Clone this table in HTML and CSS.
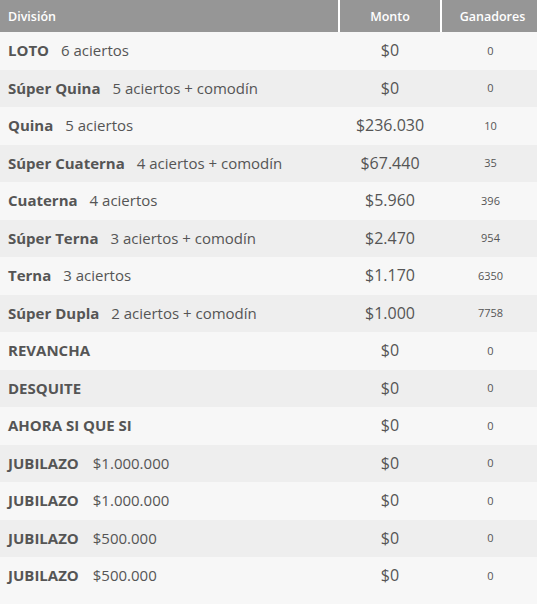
FILE: index.html
```html
<!DOCTYPE html>
<html lang="es">
<head>
<meta charset="utf-8">
<link rel="stylesheet" href="styles.css">
</head>
<body>
<table class="results">
  <thead>
    <tr>
      <th class="col-div">División</th>
      <th class="col-monto">Monto</th>
      <th class="col-gan">Ganadores</th>
    </tr>
  </thead>
  <tbody>
    <tr><td class="div"><b>LOTO</b><span>6 aciertos</span></td><td class="monto">$0</td><td class="gan">0</td></tr>
    <tr><td class="div"><b>Súper Quina</b><span>5 aciertos + comodín</span></td><td class="monto">$0</td><td class="gan">0</td></tr>
    <tr><td class="div"><b>Quina</b><span>5 aciertos</span></td><td class="monto">$236.030</td><td class="gan">10</td></tr>
    <tr><td class="div"><b>Súper Cuaterna</b><span>4 aciertos + comodín</span></td><td class="monto">$67.440</td><td class="gan">35</td></tr>
    <tr><td class="div"><b>Cuaterna</b><span>4 aciertos</span></td><td class="monto">$5.960</td><td class="gan">396</td></tr>
    <tr><td class="div"><b>Súper Terna</b><span>3 aciertos + comodín</span></td><td class="monto">$2.470</td><td class="gan">954</td></tr>
    <tr><td class="div"><b>Terna</b><span>3 aciertos</span></td><td class="monto">$1.170</td><td class="gan">6350</td></tr>
    <tr><td class="div"><b>Súper Dupla</b><span>2 aciertos + comodín</span></td><td class="monto">$1.000</td><td class="gan">7758</td></tr>
    <tr><td class="div"><b>REVANCHA</b></td><td class="monto">$0</td><td class="gan">0</td></tr>
    <tr><td class="div"><b>DESQUITE</b></td><td class="monto">$0</td><td class="gan">0</td></tr>
    <tr><td class="div"><b>AHORA SI QUE SI</b></td><td class="monto">$0</td><td class="gan">0</td></tr>
    <tr><td class="div"><b>JUBILAZO</b><span class="short">$1.000.000</span></td><td class="monto">$0</td><td class="gan">0</td></tr>
    <tr><td class="div"><b>JUBILAZO</b><span class="short">$1.000.000</span></td><td class="monto">$0</td><td class="gan">0</td></tr>
    <tr><td class="div"><b>JUBILAZO</b><span class="short">$500.000</span></td><td class="monto">$0</td><td class="gan">0</td></tr>
    <tr><td class="div"><b>JUBILAZO</b><span class="short">$500.000</span></td><td class="monto">$0</td><td class="gan">0</td></tr>
  </tbody>
</table>
</body>
</html>
```

FILE: styles.css
```css
html, body {
  margin: 0;
  padding: 0;
  background: #f7f7f7;
}
body {
  font-family: "Open Sans", "DejaVu Sans", sans-serif;
  color: #555555;
}
.results {
  width: 537px;
  border-collapse: collapse;
  table-layout: fixed;
}
.results th {
  background: #969696;
  color: #ffffff;
  font-weight: 600;
  font-size: 12.5px;
  height: 32px;
  padding: 0;
  border-left: 2px solid #ffffff;
}
.results th:first-child {
  border-left: none;
}
.col-div {
  width: 330px;
  text-align: left;
  padding-left: 8px !important;
}
.col-monto {
  width: 100px;
  text-align: center;
}
.col-gan {
  text-align: center;
  padding-left: 6px !important;
}
.results tbody tr {
  height: 37.5px;
}
.results tbody tr:nth-child(odd) {
  background: #f7f7f7;
}
.results tbody tr:nth-child(even) {
  background: #eeeeee;
}
.results td {
  padding: 0;
  vertical-align: middle;
  padding-bottom: 1px;
}
.div {
  padding-left: 8px !important;
  font-size: 15px;
  white-space: nowrap;
}
.div b {
  font-weight: 700;
}
.div span {
  margin-left: 12px;
}
.div span.short {
  margin-left: 14px;
}
.monto {
  text-align: center;
  font-size: 16px;
}
.gan {
  text-align: center;
  font-size: 11px;
  padding-left: 3px !important;
}
```
